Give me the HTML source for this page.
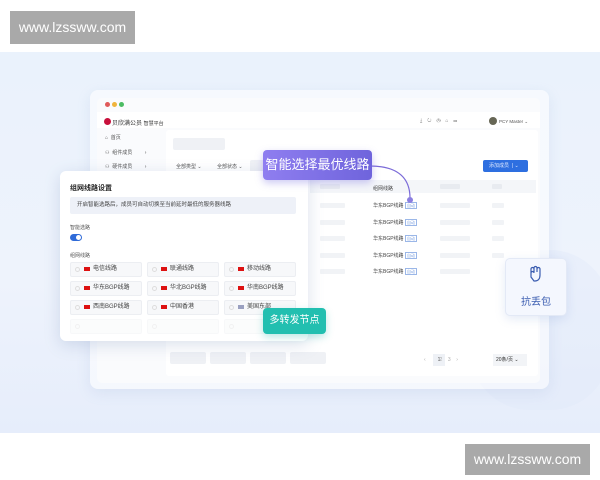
<!DOCTYPE html>
<html><head><meta charset="utf-8"><style>
*{margin:0;padding:0;box-sizing:border-box}
body{width:600px;height:480px;position:relative;overflow:hidden;background:#fff;font-family:"Liberation Sans","Noto Sans CJK SC",sans-serif;color:#333}
.a{position:absolute}
.wm{background:#a9a9a9;color:#fff;font-size:14px;line-height:33px;text-align:center}
.bg{left:0;top:52px;width:600px;height:381px;background:linear-gradient(180deg,#eaf2fc 0%,#eef3fc 60%,#e6edfb 100%)}
.win{left:90px;top:90px;width:459px;height:299px;background:rgba(255,255,255,.55);border-radius:8px;box-shadow:0 4px 14px rgba(120,150,200,.14)}
.inner{left:97px;top:98px;width:443px;height:285px;background:#fafbfd;border-radius:5px}
.t{font-size:5px;color:#555;white-space:nowrap}
.dot{width:5px;height:5px;border-radius:50%}
.row{font-size:5px;color:#444}
.gb{background:#eff1f5;border-radius:2px}
.pb{position:absolute;height:5px;background:#f1f3f6;border-radius:1px}
.panel{left:60px;top:171px;width:248px;height:170px;background:#fff;border-radius:6px;box-shadow:0 4px 16px rgba(90,120,170,.22)}
.opt{position:absolute;width:72px;height:15px;border:1px solid #eceef2;border-radius:2px;background:#f7f8fa;font-size:6px;line-height:13px;padding-left:22px;color:#444}
.opt i{position:absolute;left:13px;top:4px;width:6px;height:4px;background:#d11}
.opt b{position:absolute;left:4px;top:4px;width:5px;height:5px;border:1px solid #ddd;border-radius:50%}
</style></head><body>
<div class="a wm" style="left:10px;top:11px;width:125px;height:33px">www.lzssww.com</div>
<div class="a bg"></div>
<div class="a" style="left:470px;top:250px;width:140px;height:160px;border-radius:60px;background:#dfe7fa;opacity:.35"></div>
<div class="a win"></div>
<div class="a inner"></div>
<div class="a" style="left:97px;top:112px;width:443px;height:16px;background:#fff"></div>
<div class="a dot" style="left:105px;top:102px;background:#e05a5a"></div>
<div class="a dot" style="left:112px;top:102px;background:#f0b43c"></div>
<div class="a dot" style="left:119px;top:102px;background:#4cbc63"></div>
<div class="a" style="left:104px;top:118px;width:7px;height:7px;border-radius:50%;background:#c8103c"></div>
<div class="a t" style="left:112px;top:118px;font-size:6px;color:#333">贝欣满公员 <span style="font-size:5px">智慧平台</span></div>
<div class="a t" style="left:105px;top:134px">⌂ &nbsp;首页</div>
<div class="a t" style="left:105px;top:149px">⚇ &nbsp;组件成员 &nbsp; &nbsp; &nbsp; &nbsp; ›</div>
<div class="a t" style="left:105px;top:163px">⚇ &nbsp;硬件成员 &nbsp; &nbsp; &nbsp; &nbsp; ›</div>
<div class="a" style="left:166px;top:130px;width:372px;height:246px;background:#fff;border-radius:3px"></div>
<div class="a gb" style="left:173px;top:138px;width:52px;height:12px"></div>
<div class="a t" style="left:176px;top:163px">全部类型 ⌄</div>
<div class="a t" style="left:217px;top:163px">全部状态 ⌄</div>
<div class="a t" style="left:420px;top:118px;color:#777;letter-spacing:5px">⤓↻◷⌂▭</div>
<div class="a" style="left:489px;top:117px;width:8px;height:8px;border-radius:50%;background:#665"></div>
<div class="a t" style="left:499px;top:119px;font-size:4.5px">PCY Master ⌄</div>
<div class="a gb" style="left:250px;top:160px;width:14px;height:12px"></div>
<div class="a" style="left:483px;top:160px;width:45px;height:12px;background:#2e6fe0;border-radius:2px;font-size:5px;color:#dde8ff;line-height:12px;padding-left:6px">添加成员 &nbsp;| ⌄</div>
<div class="a" style="left:310px;top:180px;width:226px;height:13px;background:#f4f6f9"></div>
<div class="pb" style="left:320px;top:184px;width:20px;background:#e8ebf0"></div>
<div class="pb" style="left:440px;top:184px;width:20px;background:#e8ebf0"></div>
<div class="pb" style="left:492px;top:184px;width:10px;background:#e8ebf0"></div>
<div class="pb" style="left:320px;top:203px;width:25px"></div><div class="pb" style="left:440px;top:203px;width:30px"></div><div class="pb" style="left:492px;top:203px;width:12px"></div>
<div class="pb" style="left:320px;top:220px;width:25px"></div><div class="pb" style="left:440px;top:220px;width:30px"></div><div class="pb" style="left:492px;top:220px;width:12px"></div>
<div class="pb" style="left:320px;top:236px;width:25px"></div><div class="pb" style="left:440px;top:236px;width:30px"></div><div class="pb" style="left:492px;top:236px;width:12px"></div>
<div class="pb" style="left:320px;top:253px;width:25px"></div><div class="pb" style="left:440px;top:253px;width:30px"></div><div class="pb" style="left:492px;top:253px;width:12px"></div>
<div class="pb" style="left:320px;top:269px;width:25px"></div><div class="pb" style="left:440px;top:269px;width:30px"></div>
<div class="a row" style="left:373px;top:185px">组网线路</div>
<div class="a row" style="left:373px;top:202px">华东BGP线路 <span style="border:1px solid #9bb7e8;color:#7ca0e0;font-size:4px;padding:0 1px">自动</span></div>
<div class="a row" style="left:373px;top:219px">华东BGP线路 <span style="border:1px solid #9bb7e8;color:#7ca0e0;font-size:4px;padding:0 1px">自动</span></div>
<div class="a row" style="left:373px;top:235px">华东BGP线路 <span style="border:1px solid #9bb7e8;color:#7ca0e0;font-size:4px;padding:0 1px">自动</span></div>
<div class="a row" style="left:373px;top:252px">华东BGP线路 <span style="border:1px solid #9bb7e8;color:#7ca0e0;font-size:4px;padding:0 1px">自动</span></div>
<div class="a row" style="left:373px;top:268px">华东BGP线路 <span style="border:1px solid #9bb7e8;color:#7ca0e0;font-size:4px;padding:0 1px">自动</span></div>
<div class="a" style="left:433px;top:354px;width:12px;height:12px;background:#eef1f6;font-size:5px;text-align:center;line-height:12px;color:#555">1</div>
<div class="a t" style="left:424px;top:357px;color:#aaa">‹ &nbsp; &nbsp; &nbsp; &nbsp; &nbsp;2 &nbsp; &nbsp;3 &nbsp; &nbsp;›</div>
<div class="a" style="left:493px;top:354px;width:34px;height:12px;background:#f2f4f7;font-size:5px;line-height:12px;padding-left:3px">20条/页 ⌄</div>
<div class="a gb" style="left:170px;top:352px;width:36px;height:12px"></div>
<div class="a gb" style="left:210px;top:352px;width:36px;height:12px"></div>
<div class="a gb" style="left:250px;top:352px;width:36px;height:12px"></div>
<div class="a gb" style="left:290px;top:352px;width:36px;height:12px"></div>

<div class="a panel"></div>
<div class="a" style="left:70px;top:183px;font-size:7px;font-weight:bold;color:#222">组网线路设置</div>
<div class="a" style="left:70px;top:197px;width:226px;height:17px;background:#eef1f8;border-radius:2px;font-size:5.5px;line-height:17px;padding-left:7px;color:#444">开启智能选路后，成员可自动切换至当前延时最低的服务器线路</div>
<div class="a t" style="left:70px;top:224px">智能选路</div>
<div class="a" style="left:70px;top:234px;width:12px;height:7px;border-radius:4px;background:#2f6bd8"><div class="a" style="left:6px;top:1px;width:5px;height:5px;border-radius:50%;background:#fff"></div></div>
<div class="a t" style="left:70px;top:252px">组网线路</div>
<div class="opt" style="left:70px;top:262px"><b></b><i></i>电信线路</div>
<div class="opt" style="left:147px;top:262px"><b></b><i></i>联通线路</div>
<div class="opt" style="left:224px;top:262px"><b></b><i></i>移动线路</div>
<div class="opt" style="left:70px;top:281px"><b></b><i></i>华东BGP线路</div>
<div class="opt" style="left:147px;top:281px"><b></b><i></i>华北BGP线路</div>
<div class="opt" style="left:224px;top:281px"><b></b><i></i>华南BGP线路</div>
<div class="opt" style="left:70px;top:300px"><b></b><i></i>西南BGP线路</div>
<div class="opt" style="left:147px;top:300px"><b></b><i></i>中国香港</div>
<div class="opt" style="left:224px;top:300px"><b></b><i style="background:#9aa0c0"></i>美国东部</div>
<div class="opt" style="left:70px;top:319px;opacity:.4"><b></b></div>
<div class="opt" style="left:147px;top:319px;opacity:.4"><b></b></div>
<div class="opt" style="left:224px;top:319px;opacity:.4"><b></b></div>

<svg class="a" style="left:360px;top:160px" width="60" height="60"><path d="M10 6 C40 6 50 20 50 38" stroke="#7b6bd8" stroke-width="1.2" fill="none"/><circle cx="50" cy="40" r="3" fill="#8c7fe0"/></svg>
<div class="a" style="left:263px;top:150px;width:109px;height:30px;background:linear-gradient(90deg,#8f7ef0,#6f64dc);border-radius:4px;color:#fff;font-size:13px;line-height:30px;text-align:center;box-shadow:0 3px 8px rgba(110,100,220,.35)">智能选择最优线路</div>
<div class="a" style="left:263px;top:308px;width:63px;height:26px;background:#22bfb0;border-radius:4px;color:#fff;font-size:10px;line-height:26px;text-align:center;box-shadow:0 3px 8px rgba(30,180,170,.3)">多转发节点</div>
<div class="a" style="left:505px;top:258px;width:62px;height:58px;background:#f4f7fe;border:1px solid #e3e9f6;border-radius:5px;box-shadow:0 3px 10px rgba(120,150,210,.2)"></div>
<svg class="a" style="left:527px;top:265px" width="18" height="18" viewBox="0 0 18 18" fill="none" stroke="#3a5cb0" stroke-width="1.2"><path d="M4 8V4a1.5 1.5 0 013 0v3M7 6V3a1.5 1.5 0 013 0v4M10 6V4a1.5 1.5 0 013 0v6c0 4-2 6-5 6H7l-3-4V8a1.5 1.5 0 013 0"/></svg>
<div class="a" style="left:505px;top:293px;width:62px;text-align:center;font-size:10px;color:#3a5cb0">抗丢包</div>
<div class="a wm" style="left:465px;top:444px;width:125px;height:31px;line-height:31px">www.lzssww.com</div>
</body></html>
